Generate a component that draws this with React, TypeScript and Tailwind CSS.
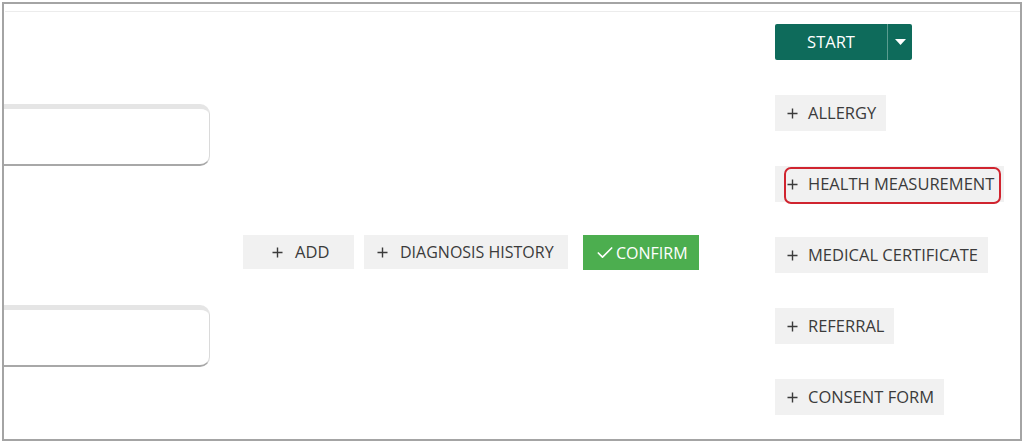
import React from 'react';
import { Check } from 'lucide-react';

const font = { fontFamily: '"Open Sans", "Liberation Sans", sans-serif' };

const PlusMark: React.FC = () => (
  <svg width="11" height="11" viewBox="0 0 11 11" className="shrink-0">
    <path d="M5.5 0.5 V10.5 M0.5 5.5 H10.5" stroke="#3b3b3b" strokeWidth="1.4" />
  </svg>
);

const SideButton: React.FC<{ label: string; marked?: boolean }> = ({ label, marked }) => (
  <div className="relative self-start">
    <button className="h-[36px] flex items-center bg-[#f1f1f1] pl-[12px] pr-[10px] text-[16.5px] text-[#3b3b3b]">
      <PlusMark />
      <span className="ml-[10px]">{label}</span>
    </button>
    {marked && (
      <div className="absolute left-[9px] top-[1px] w-[217px] h-[37px] border-2 border-[#d0242f] rounded-[7px]" />
    )}
  </div>
);

const InputBox: React.FC = () => (
  <div className="w-[206px] h-[62px] bg-white border border-[#dadada] border-l-0 border-t-[5px] border-t-[#e5e5e5] border-b-[2px] border-b-[#a8a8a8] rounded-r-[10px]" />
);

export default function App() {
  return (
    <div className="w-[1024px] h-[444px] bg-white pt-[2px] pl-[2px] pr-[2px] pb-[3px]" style={font}>
      <div className="h-full border-2 border-[#a4a4a4] overflow-hidden flex flex-col">
        {/* faint top rule */}
        <div className="h-[8px] ml-[1px] border-b border-[#ececec] shrink-0" />

        <div className="flex flex-1">
          {/* left inputs */}
          <div className="w-[206px] flex flex-col">
            <div className="mt-[92px]">
              <InputBox />
            </div>
            <div className="mt-[139px]">
              <InputBox />
            </div>
          </div>

          {/* middle actions */}
          <div className="flex items-start gap-[10px] ml-[33px] mt-[223px] h-[34px]">
            <button className="h-[34px] w-[111px] flex items-center bg-[#f1f1f1] pl-[29px] text-[16.5px] text-[#3b3b3b]">
              <PlusMark />
              <span className="ml-[12px]">ADD</span>
            </button>
            <button className="h-[34px] w-[204px] flex items-center bg-[#f1f1f1] pl-[13px] text-[16px] text-[#3b3b3b]">
              <PlusMark />
              <span className="ml-[12px]">DIAGNOSIS HISTORY</span>
            </button>
            <button className="h-[35px] w-[116px] ml-[5px] flex items-center bg-[#4cae4f] pl-[12px] text-[16px] text-white">
              <Check size={20} strokeWidth={2} className="mr-[1px]" />
              <span>CONFIRM</span>
            </button>
          </div>

          {/* right column */}
          <div className="ml-[76px] mt-[12px] flex flex-col gap-[35px]">
            <div className="flex h-[36px] w-[137px] bg-[#0e6b5b] rounded-[2px]">
              <button className="w-[112px] h-full text-[16.5px] text-white">START</button>
              <div className="w-px h-full bg-[#5b9c90]" />
              <button className="flex-1 flex items-center justify-center">
                <svg width="11" height="7" viewBox="0 0 11 7">
                  <path d="M0 0 L11 0 L5.5 6 Z" fill="white" />
                </svg>
              </button>
            </div>
            <SideButton label="ALLERGY" />
            <SideButton label="HEALTH MEASUREMENT" marked />
            <SideButton label="MEDICAL CERTIFICATE" />
            <SideButton label="REFERRAL" />
            <SideButton label="CONSENT FORM" />
          </div>
        </div>
      </div>
    </div>
  );
}
